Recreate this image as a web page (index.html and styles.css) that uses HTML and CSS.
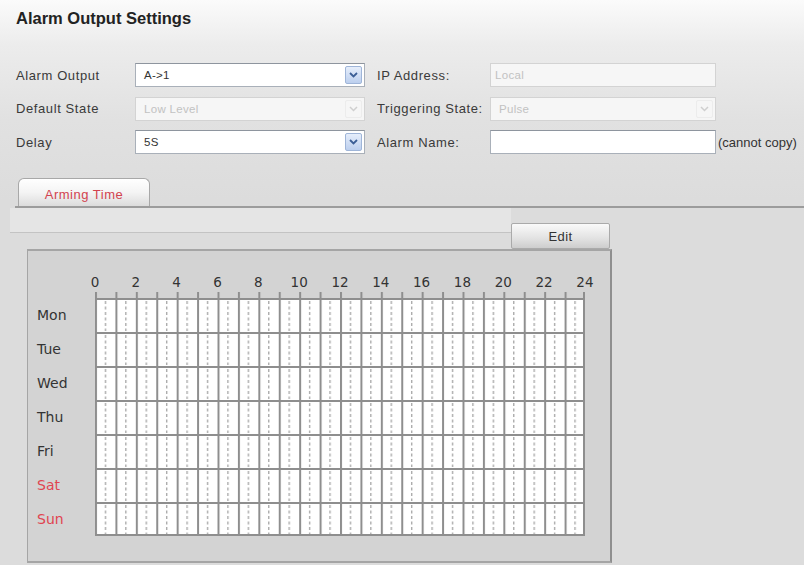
FILE: index.html
```html
<!DOCTYPE html>
<html>
<head>
<meta charset="utf-8">
<link rel="stylesheet" href="styles.css">
</head>
<body>
<div class="page">
  <div class="header"><h1 class="title">Alarm Output Settings</h1></div>

  <div class="form">
    <label class="lbl">Alarm Output</label>
    <div class="select"><span class="val">A-&gt;1</span><span class="arrow"><svg width="9" height="6" viewBox="0 0 9 6"><path d="M1 1 L4.5 4.5 L8 1" fill="none" stroke="#3c5f96" stroke-width="1.8"/></svg></span></div>
    <label class="lbl lbl2">IP Address:</label>
    <div class="input disabled"><span class="val">Local</span></div>
    <span></span>

    <label class="lbl">Default State</label>
    <div class="select disabled"><span class="val">Low Level</span><span class="arrow"><svg width="9" height="6" viewBox="0 0 9 6"><path d="M1 1 L4.5 4.5 L8 1" fill="none" stroke="#cfcfcf" stroke-width="1.5"/></svg></span></div>
    <label class="lbl lbl2">Triggering State:</label>
    <div class="select disabled"><span class="val">Pulse</span><span class="arrow"><svg width="9" height="6" viewBox="0 0 9 6"><path d="M1 1 L4.5 4.5 L8 1" fill="none" stroke="#cfcfcf" stroke-width="1.5"/></svg></span></div>
    <span></span>

    <label class="lbl">Delay</label>
    <div class="select"><span class="val">5S</span><span class="arrow"><svg width="9" height="6" viewBox="0 0 9 6"><path d="M1 1 L4.5 4.5 L8 1" fill="none" stroke="#3c5f96" stroke-width="1.8"/></svg></span></div>
    <label class="lbl lbl2">Alarm Name:</label>
    <div class="input"></div>
    <span class="note">(cannot copy)</span>
  </div>

  <div class="tabs">
    <div class="tab">Arming Time</div>
  </div>

  <div class="toolbar">
    <div class="band"></div>
    <button class="btn">Edit</button>
  </div>

  <div class="panel">
    <div class="hours">
      <span>0</span><span>2</span><span>4</span><span>6</span><span>8</span><span>10</span><span>12</span><span>14</span><span>16</span><span>18</span><span>20</span><span>22</span><span>24</span>
    </div>
    <div class="sched">
      <div class="days">
        <span>Mon</span><span>Tue</span><span>Wed</span><span>Thu</span><span>Fri</span><span class="we">Sat</span><span class="we">Sun</span>
      </div>
      <svg class="grid" width="492" height="244" viewBox="0 0 492 244">
        <defs>
          <pattern id="cells" patternUnits="userSpaceOnUse" x="1" y="6" width="20.4167" height="34">
            <rect x="0" y="0" width="20.4167" height="34" fill="#ffffff"/>
            <line x1="10.5" y1="3" x2="10.5" y2="33" stroke="#8a8a8a" stroke-width="1" stroke-dasharray="3 2.5"/>
            <rect x="0" y="0" width="2" height="34" fill="#8e8e8e"/>
            <rect x="0" y="0" width="20.4167" height="2" fill="#8e8e8e"/>
          </pattern>
          <pattern id="ticks" patternUnits="userSpaceOnUse" x="1" y="0" width="20.4167" height="6">
            <rect x="0" y="0" width="2" height="6" fill="#8e8e8e"/>
          </pattern>
        </defs>
        <rect x="1" y="0" width="490" height="6" fill="url(#ticks)"/>
        <rect x="1" y="6" width="490" height="238" fill="url(#cells)"/>
        <rect x="489" y="0" width="2" height="244" fill="#8e8e8e"/>
        <rect x="1" y="242" width="490" height="2" fill="#8e8e8e"/>
      </svg>
    </div>
  </div>
</div>
</body>
</html>
```

FILE: styles.css
```css
* { box-sizing: border-box; }
html, body {
  margin: 0;
  padding: 0;
}
body {
  width: 804px;
  height: 565px;
  overflow: hidden;
  background: #dcdcdc;
  font-family: "Liberation Sans", Arial, sans-serif;
  font-size: 12px;
  color: #333;
}
.page {
  width: 804px;
  height: 565px;
  background: linear-gradient(to bottom, #fbfbfb 0px, #ececec 45px, #e1e1e1 120px, #dcdcdc 200px);
}
.header {
  height: 63px;
  padding: 9px 0 0 16px;
}
.title {
  margin: 0;
  font-size: 16.5px;
  font-weight: bold;
  color: #222;
}
.form {
  display: grid;
  grid-template-columns: 119px 230px 125px 226px auto;
  row-gap: 9.5px;
  padding-left: 16px;
  align-items: center;
}
.lbl {
  font-size: 13px;
  letter-spacing: 0.6px;
  color: #3a3a3a;
  white-space: nowrap;
}
.lbl2 { padding-left: 12px; }
.select, .input {
  height: 24px;
  display: flex;
  align-items: center;
  justify-content: space-between;
  background: #fff;
  border: 1px solid #a9b0b9;
  border-top-color: #8e959e;
  padding-left: 8px;
}
.input { padding-left: 4px; }
.val { font-size: 11.5px; color: #333; letter-spacing: 0.3px; }
.disabled { background: #f6f6f6; border-color: #d3d3d3; }
.disabled .val { color: #c2c2c2; }
.arrow {
  width: 17px;
  height: 18px;
  margin-right: 2px;
  display: flex;
  align-items: center;
  justify-content: center;
  background: linear-gradient(to bottom, #e6eefb, #bccfee);
  border: 1px solid #9fb5d8;
  border-radius: 2px;
}
.disabled .arrow {
  background: #f6f6f6;
  border-color: #ececec;
}
.note {
  padding-left: 2px;
  font-size: 13px;
  color: #333;
  white-space: nowrap;
}
.tabs {
  margin-top: 24px;
  margin-left: 15px;
  height: 30px;
  border-bottom: 2px solid #9c9c9c;
  display: flex;
  align-items: flex-end;
  padding-left: 3px;
}
.tab {
  width: 132px;
  height: 28px;
  border: 1px solid #a8a8a8;
  border-bottom: none;
  border-radius: 6px 6px 0 0;
  background: linear-gradient(to bottom, #ffffff 0%, #f4f4f4 50%, #dcdcdc 100%);
  color: #d2434f;
  font-size: 13px;
  letter-spacing: 0.5px;
  display: flex;
  align-items: center;
  justify-content: center;
  padding-top: 3px;
}
.toolbar {
  display: flex;
  align-items: flex-start;
  margin-left: 10px;
  height: 41px;
}
.band {
  width: 501px;
  height: 25px;
  background: #e5e5e5;
  border-bottom: 1px solid #c3c3c3;
}
.btn {
  margin-top: 15px;
  width: 99px;
  height: 26px;
  border: 1px solid #aaaaaa;
  border-radius: 2px;
  background: linear-gradient(to bottom, #fafafa, #e2e2e2 60%, #cdcdcd);
  font-family: "Liberation Sans", Arial, sans-serif;
  font-size: 13px;
  letter-spacing: 0.4px;
  color: #333;
  padding: 0;
}
.panel {
  margin-left: 27px;
  width: 585px;
  height: 314px;
  background: #d3d3d3;
  border: 2px solid #a5a5a5;
  border-right-color: #8f8f8f;
  border-left-width: 1px;
  padding-top: 22px;
}
.hours {
  display: flex;
  margin-left: 46.6px;
  height: 19px;
  line-height: 18px;
  font-family: "DejaVu Sans", Verdana, sans-serif;
  font-size: 13.5px;
  color: #333;
}
.hours span {
  width: 40.8333px;
  text-align: center;
  flex: none;
}
.sched {
  display: flex;
}
.days {
  width: 66px;
  padding-top: 6px;
  padding-left: 9px;
  display: flex;
  flex-direction: column;
  font-family: "DejaVu Sans", Verdana, sans-serif;
  font-size: 14px;
  color: #333;
}
.days span {
  height: 34px;
  line-height: 34px;
}
.days .we { color: #e04450; }
.grid { display: block; flex: none; }
```
